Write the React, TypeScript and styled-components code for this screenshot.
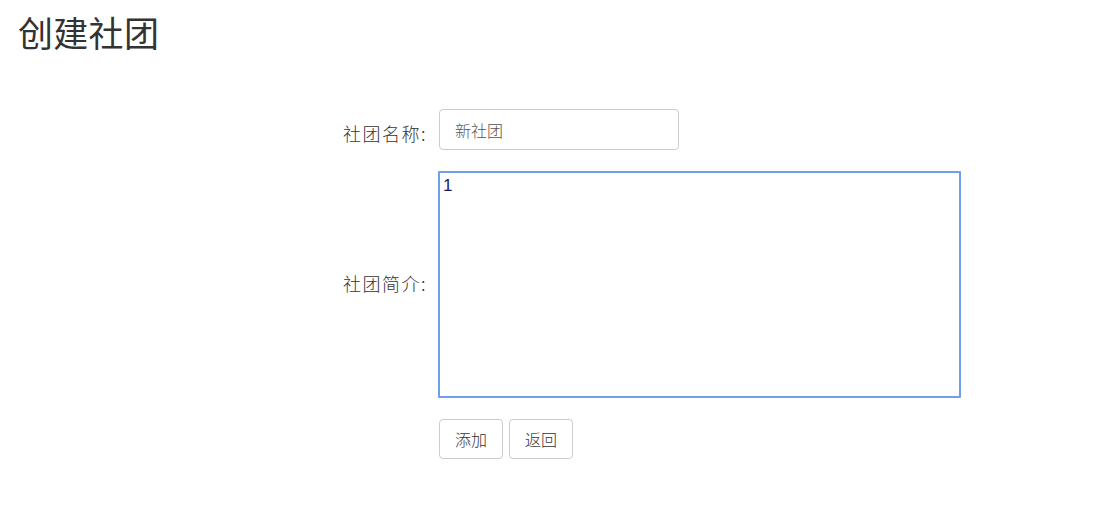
import React from "react";
import styled, { createGlobalStyle } from "styled-components";

const Global = createGlobalStyle`
  html, body { margin: 0; padding: 0; background: #fff; }
  body {
    font-family: "Noto Sans CJK SC", "Noto Sans", "Liberation Sans", sans-serif;
    color: #333;
  }
`;

const Page = styled.div`
  padding: 0 18px;
`;

const Title = styled.h1`
  margin: 8px 0 0;
  font-size: 35px;
  font-weight: 400;
  line-height: 48px;
  letter-spacing: 0.3px;
  color: #333;
`;

const Form = styled.form`
  margin-top: 53px;
  display: grid;
  grid-template-columns: 409px 522px;
  column-gap: 12px;
  row-gap: 21px;
  align-items: center;
`;

const Label = styled.label<{ $shift?: number }>`
  text-align: right;
  font-size: 18px;
  font-weight: 300;
  letter-spacing: 1.5px;
  color: #333;
  position: relative;
  top: ${(p) => p.$shift ?? 0}px;
`;

const Input = styled.input`
  box-sizing: border-box;
  width: 240px;
  height: 41px;
  padding: 0 15px;
  border: 1px solid #ccc;
  border-radius: 4px;
  font-family: inherit;
  font-size: 16px;
  font-weight: 300;
  color: #555;
  outline: none;
`;

const TextArea = styled.textarea`
  box-sizing: border-box;
  width: 523px;
  height: 227px;
  margin-left: -1px;
  padding: 3px 3px;
  border: 2px solid #6f9fea;
  border-radius: 1px;
  font-family: "Liberation Sans", "Noto Sans CJK SC", sans-serif;
  font-size: 17px;
  color: #1c1c5c;
  resize: none;
  outline: none;
`;

const Buttons = styled.div`
  grid-column: 2;
  display: flex;
  gap: 6px;
`;

const Button = styled.button`
  box-sizing: border-box;
  width: 64px;
  height: 40px;
  background: #fff;
  border: 1px solid #ccc;
  border-radius: 4px;
  font-family: inherit;
  font-size: 16px;
  font-weight: 300;
  color: #333;
  padding: 0;
  cursor: pointer;
`;

export default function App() {
  return (
    <Page>
      <Global />
      <Title>创建社团</Title>
      <Form onSubmit={(e) => e.preventDefault()}>
        <Label $shift={3}>社团名称:</Label>
        <div>
          <Input defaultValue="新社团" />
        </div>
        <Label $shift={-2}>社团简介:</Label>
        <TextArea defaultValue="1" />
        <Buttons>
          <Button type="submit">添加</Button>
          <Button type="button">返回</Button>
        </Buttons>
      </Form>
    </Page>
  );
}
